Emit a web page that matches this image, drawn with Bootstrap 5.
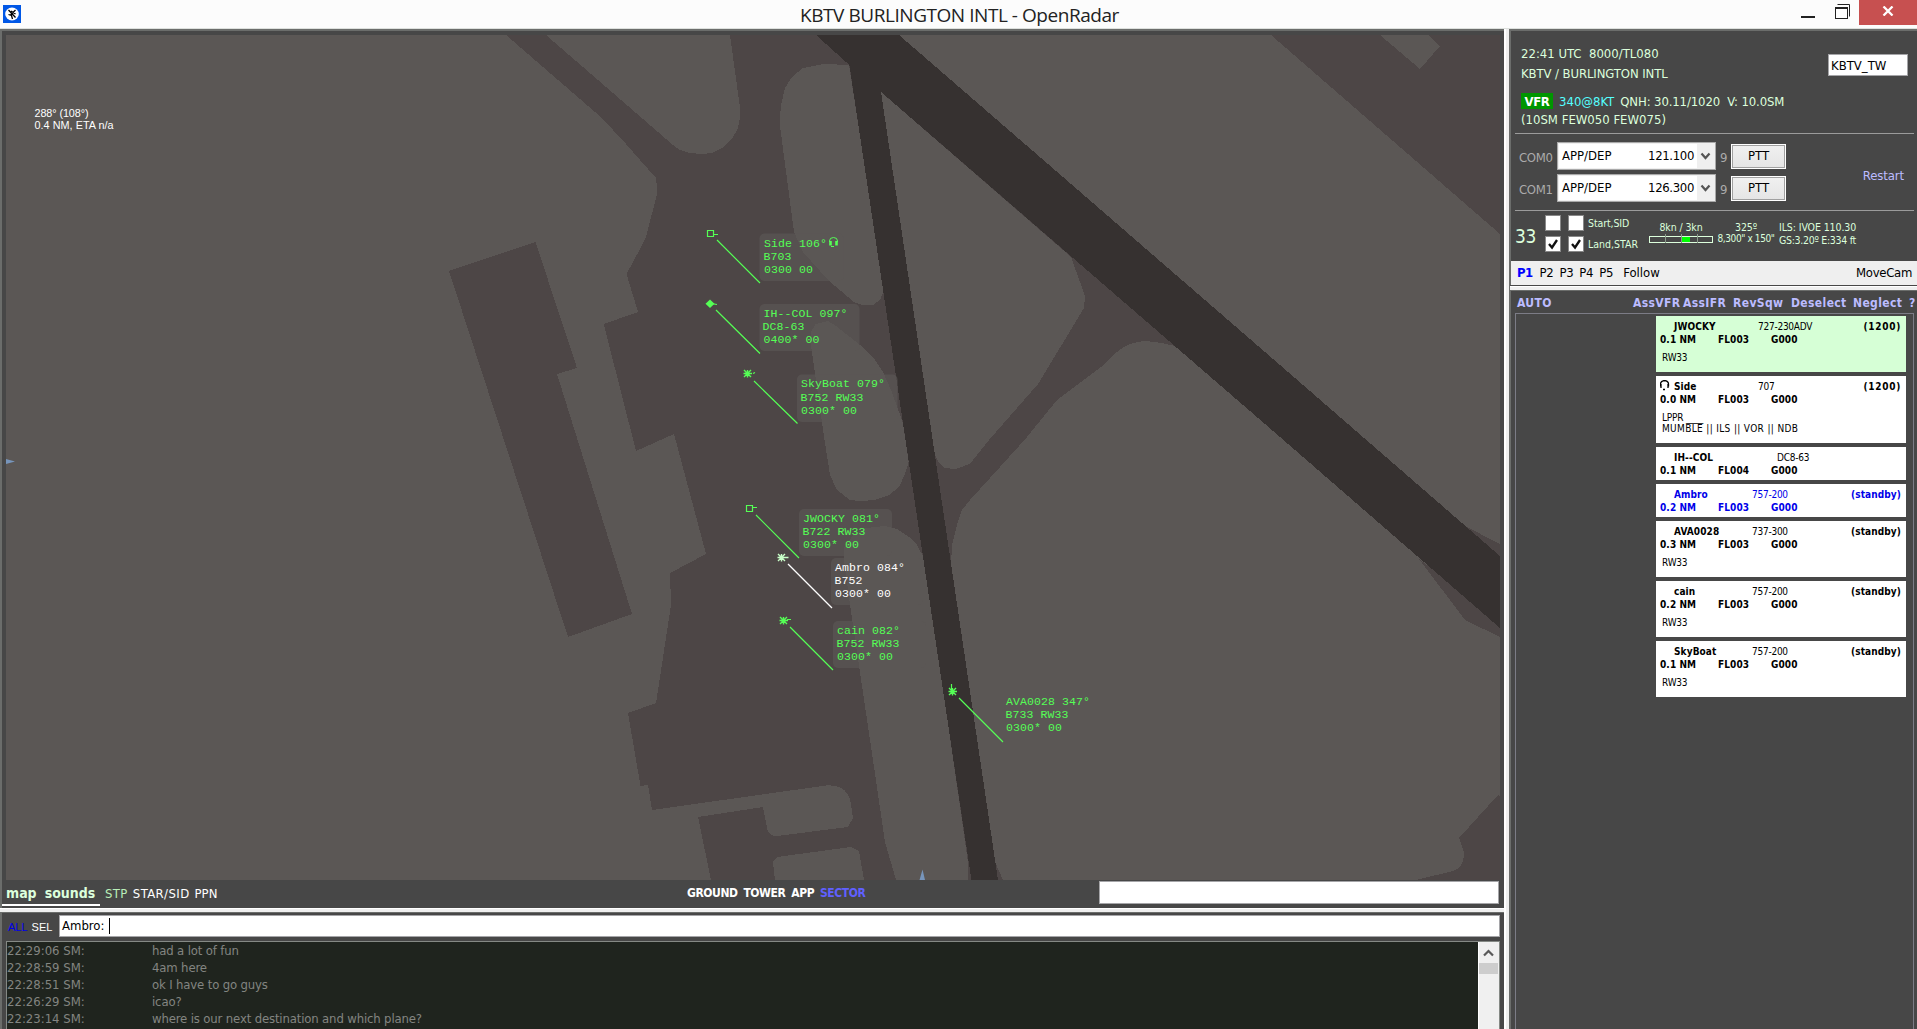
<!DOCTYPE html>
<html lang="en">
<head>
<meta charset="utf-8">
<title>KBTV BURLINGTON INTL - OpenRadar</title>
<link rel="stylesheet" href="https://cdn.jsdelivr.net/npm/bootstrap@5.3.0/dist/css/bootstrap.min.css">
<style>
:root{--panel:#474747;--edge:#6b6d6b;--mint:#dcffdc;--lav:#bcbcff}
html,body{height:100%}
body{font-family:"DejaVu Sans Condensed","DejaVu Sans",sans-serif;font-size:13px;line-height:18px;color:#000;background:var(--panel);width:1917px;height:1029px;white-space:pre}
svg{display:block}
.titlebar{height:29px;background:#fcfcfc;border-bottom:1px solid #dde0dd}
.wtitle{font:19px/25px "Open Sans",sans-serif;letter-spacing:-.45px;color:#222;padding:3px 0 0 2px}
.closebox{width:58px;height:25px;background:#c75050}
.main{height:1000px}
.leftcol{width:1504px}
.vsplit{width:5px;background:linear-gradient(90deg,#fff 2px,#efefef 2px)}
.mappane{height:879px;border-top:2px solid var(--edge);border-left:2px solid var(--edge);padding:4px 0 0 4px}
.mapbar{height:28px;padding-right:5px}
.tabs{width:98px;height:26px;margin-left:-4px;padding:4px 0 0 4px;border-bottom:2px solid #fff;font-weight:700;font-size:14px;line-height:18px;color:var(--mint)}
.tabs span+span{margin-left:8px}
.ranges{font-weight:700;font-size:12px;letter-spacing:-.42px;color:#fff;gap:5.8px;margin-left:236px;padding-top:4px}
.field{background:#fff;border:1px solid #a5a5a8}
.hsplit{height:5px;background:linear-gradient(#fff 1px,#efefef 1px 4px,var(--edge) 4px)}
.chatpane{border-left:2px solid var(--edge);padding:2px 4px 0 4px;min-height:0;overflow:hidden}
.whom{font:11px/18px "Liberation Sans",sans-serif;width:53px;color:#fff}
.caret{width:1px;height:16px;background:#000;margin-left:1px}
.log{margin-top:4px;height:90px;border:1px solid #858985;background:#1f241e;color:#838581;line-height:17px}
.log .who{width:145px}
.log .said{letter-spacing:-.15px}
.sbar{width:21px;background:#f0f0f0;border-left:1px solid #fff}
.thumb{width:19px;height:11px;background:#cdcdcd}
.side{width:408px;border-left:2px solid var(--edge);border-top:2px solid var(--edge)}
.info{height:103px;margin:0 3px 0 4px;padding:13px 6px 0 6px;border-bottom:1px solid #9b9b9b;color:var(--mint);line-height:20px}
.info .wx{line-height:18px}
.vfr{background:#009600;color:#fff;font-weight:700;width:32px;height:16px;line-height:17px;letter-spacing:-.4px}
.callbox{width:80px;height:22px;line-height:21px;margin-top:10px;padding-left:2px;color:#000}
.coms{height:77px;margin:0 3px 0 4px;border-bottom:1px solid #9b9b9b}
.comrow{height:28px}
.comlab{color:#ababab;padding-top:3px;letter-spacing:-.3px}
.combo{width:159px;height:28px;background:#efefef;border:1px solid #a9a9a9;padding:1px;line-height:24px}
.combo .val{background:#fff;padding:0 3px;width:138px}
.combo .val b{font-weight:400;letter-spacing:-.35px}
.ptt{width:55px;height:25px;border:1px solid #fff;outline:1px solid #a0a0a0;outline-offset:-2px;background:linear-gradient(#f0f0f0,#e5e5e5);line-height:22px}
.rwy{height:50px;margin-left:4px;color:var(--mint);font-size:10.5px;line-height:13px;letter-spacing:-.1px}
.rwno{font-size:19px;line-height:24px;letter-spacing:-.4px;width:30px}
.ck{width:16px;height:16px;background:#fff;border:1px solid #888}
.prefs{height:24px;background:#efefef;line-height:24px;padding:0 5px 0 6px;letter-spacing:-.3px}
.psplit{height:6px;margin-left:-1px;border-top:1px solid #474747;background:linear-gradient(#fff 1px,#efefef 1px 4px,var(--edge) 4px)}
.acts{height:22px;font-size:12px;line-height:25px;font-weight:700;letter-spacing:.38px;color:var(--lav);padding-left:6px}
.strips{margin:0 3px 0 4px;height:716px;border:1px solid #7c7c86;border-bottom:0;padding:2px 7px 0 0;gap:4px}
.strip{width:250px;background:#fff;font-size:10px;line-height:13px;padding:4px 5px 0 4px}
.strip.owned{background:#d6ffd6}
.strip.chosen{color:#0000e8}
.strip b{letter-spacing:.1px}
.strip .call{padding-left:14px;width:var(--c)}
.strip .dist{width:58px}.strip .lvl{width:53px}
.strip .model{letter-spacing:-.25px}
.strip .note{margin-top:6px;padding-left:2px;line-height:11px;letter-spacing:-.2px}
.phones{left:4px;top:4px}
.mono{font-family:"Liberation Mono",monospace;font-size:11.5px;fill:#55ff55}
</style>
<script src="https://cdn.jsdelivr.net/npm/bootstrap@5.3.0/dist/js/bootstrap.bundle.min.js"></script>
</head>
<body class="overflow-hidden m-0"><header class="titlebar d-flex justify-content-center position-relative"><svg class="position-absolute start-0 top-0" width="24" height="28"><rect x="3" y="5" width="18" height="18" fill="#0057e6"/><ellipse cx="12" cy="14" rx="6.8" ry="6.500" fill="#fff"/><path d="M8.500 10l7 7.500M15.500 10l-5 5M8.500 14.500l3 1 1 3.500M11 11l4.500 3" stroke="#000" stroke-width="1.300" fill="none"/></svg><div class="wtitle">KBTV BURLINGTON INTL - OpenRadar</div><div class="position-absolute end-0 top-0 d-flex"><svg width="58" height="26"><path d="M0 17h14" stroke="#222" stroke-width="2"/><path d="M36.500 4.500h12v12" fill="none" stroke="#222"/><rect x="34.500" y="7.500" width="12" height="11" fill="#fff" stroke="#222"/><path d="M34 8h13" stroke="#222" stroke-width="2"/></svg><div class="closebox d-flex align-items-center justify-content-center"><svg width="12" height="10" class="mb-1"><path d="M1.500.5l9 9M10.500.5l-9 9" stroke="#fff" stroke-width="2.300"/></svg></div></div></header><main class="main d-flex"><section class="leftcol d-flex flex-column"><div class="mappane flex-shrink-0"><svg width="1494" height="845" viewBox="6 35 1494 845">
<rect x="6" y="35" width="1494" height="845" fill="#5b5755"/>
<g fill="#4d4646" shape-rendering="crispEdges">
<path d="M449 271L535.500 242 577 368 557 374 632 614 568 637Z"/>
<path d="M506 35L595 112 613 130 626 144 640 160 656 178 657.500 192 646 237 640 249 626.500 274 638 312 603.700 324 636 451 674 434 706 554 670 573 671 605 656 703 628 713 640.500 786 648 785 652 810 826 785.500Q848 784 851 804L853 818 848 827 777 836Q768 836 767 828L763 807 698 817 711 880H775L773 862 777 857 851 847 859 851 864 880H1003L999 870 951 565 952 545 957 525 962 510 970 500 1024.500 440 1057 400 1101 367 1115.500 353Q1130 341 1146 341L1162 343 1175 346 1020 180 899 35Z"/>
<path d="M1271 35H1500V234Z"/><path d="M1463 525L1500 544V560ZM1419 559L1465 620 1500 637V620Z"/>
<path d="M1498 795L1500 796V880H1416L1453 871Q1464 868 1464 852L1459 838Z"/>
</g>
<g fill="#5b5755" shape-rendering="crispEdges">
<path d="M546 35L673 145 680 150 690 153 702 154 712 153 722 148 732 139 738 128 740 118V108L730 35Z"/>
<path d="M849 65L824 64 803 68 792 77 785 88 781 105 779.600 123 794 232 803 252 828 280 854 302 862 305 873 305 880 300 884 290Z"/>
<path d="M811 345V332L815.500 324 828 321 836 326 860 345 873.500 358 883 372 891 390 903 423 908.600 462 905 474 899 487 889 495 875 500 860 501 850 500 837 490 830 475 824.500 440Z"/>
<path d="M896 880L885 842 873 760 850 605 844 560V548L854 534 866 528 885 526 897 529 909 537 917 545 924 558 968 862V880Z"/>
<path d="M881 92L1071 257 1085 296 1084 308 1038 384 989 440 970.600 463 966.500 465 956 469 944 468 938 461 933 450Z"/>
<path d="M1380 35L1420 69 1440 46 1428 35Z"/>
<path d="M1003 880L951 565 953 600 995 862Z"/>
</g>
<path d="M816 35H899L1280 365 1500 556V628L1280 437 881 92 998 880H971.400L849.400 65Z" fill="#363130" shape-rendering="crispEdges"/>
<path d="M922.500 869.500L925 880H919.500ZM6 459L15 461.500 6 464Z" fill="#7795bb"/>
<g fill="#5b5755" fill-opacity=".68">
<rect x="759.500" y="233.500" width="84" height="47.500" rx="5"/><rect x="759.500" y="304" width="100" height="47" rx="5"/><rect x="797" y="374.500" width="100.500" height="47.500" rx="5"/><rect x="799" y="509" width="93" height="47" rx="5"/><rect x="831" y="558" width="92" height="47" rx="5"/><rect x="833" y="621" width="93" height="47" rx="5"/>
</g>
<g stroke="#55ff55" fill="none" stroke-width="1.200">
<path d="M717 240L760 283M716 310L760 353.500M754 381L797.500 423.500M756 515L799 558M790 627L833 670M959 698L1003 742"/>
<path d="M707.500 230.500h6v6h-6zM714 234.500h4M746.500 505.500h6v6h-6zM753 507.500h4M711 303.500l6 1M753 373.500l2-1M787 619.500h4M951.500 690v-6"/>
<path d="M788 564L832 608" stroke="#fff"/>
</g>
<path d="M710 299.500l4.500 4.200-4.500 4.200-4.500-4.200z" fill="#55ff55"/>
<g fill="none" stroke-width="1.400"><g stroke="#55ff55"><path id="st" d="M744 370l7 7M751 370l-7 7M747.500 370v7.500M743.500 373.500h8.500"/><use href="#st" x="36" y="247"/><use href="#st" x="205" y="318"/></g><path d="M778 554l7 7M785 554l-7 7M781.500 554v7.500M777.500 557.500h11" stroke="#c8ffc8"/></g>
<g class="mono">
<text x="764" y="247" textLength="63" xml:space="preserve">Side 106°</text><text x="763.500" y="260" textLength="28">B703</text><text x="764" y="273" textLength="49">0300 00</text>
<text x="763.500" y="317" textLength="84">IH--COL 097°</text><text x="762.500" y="330" textLength="42">DC8-63</text><text x="763.500" y="343" textLength="56">0400* 00</text>
<text x="801" y="387" textLength="84">SkyBoat 079°</text><text x="800.500" y="401" textLength="63">B752 RW33</text><text x="801" y="414" textLength="56">0300* 00</text>
<text x="803" y="522" textLength="77">JWOCKY 081°</text><text x="802.500" y="535" textLength="63">B722 RW33</text><text x="803" y="548" textLength="56">0300* 00</text>
<g fill="#fff"><text x="835" y="571" textLength="70">Ambro 084°</text><text x="834.500" y="584" textLength="28">B752</text><text x="835" y="597" textLength="56">0300* 00</text></g>
<text x="837" y="634" textLength="63">cain 082°</text><text x="836.500" y="647" textLength="63">B752 RW33</text><text x="837" y="660" textLength="56">0300* 00</text>
<text x="1006" y="705" textLength="84">AVA0028 347°</text><text x="1005.500" y="718" textLength="63">B733 RW33</text><text x="1006" y="731" textLength="56">0300* 00</text>
</g>
<g fill="none" stroke="#55ff55"><path d="M829.500 242v-1q0-3.500 4-3.500t4 3.500v1M831 246.500h3"/><path d="M830.500 241v4.500M836.500 241v4.500" stroke-width="2.600"/></g>
<g fill="#fff" font-family="Liberation Sans, sans-serif" font-size="10.800"><text x="34.500" y="117" textLength="54">288° (108°)</text><text x="34.500" y="129" textLength="79">0.4 NM, ETA n/a</text></g>
</svg><div class="mapbar d-flex justify-content-between"><div class="d-flex"><div class="tabs"><span>map</span><span>sounds</span></div><div class="d-flex text-white" style="padding:5px 0 0 5px;gap:5px"><span style="color:#b9efb9;letter-spacing:.4px">STP</span><span style="letter-spacing:.4px">STAR/SID</span><span>PPN</span></div></div><div class="ranges d-flex"><span>GROUND</span><span>TOWER</span><span>APP</span><span style="color:#6060ff">SECTOR</span></div><div class="field" style="width:400px;height:23px;margin-top:1px"></div></div></div><div class="hsplit flex-shrink-0"></div><div class="chatpane flex-grow-1"><div class="d-flex" style="height:22px"><div class="whom d-flex gap-1" style="padding:3px 0 0 2px"><span style="color:#0000e8">ALL</span><span>SEL</span></div><div class="field d-flex align-items-center flex-grow-1" style="padding-left:2px"><span>Ambro: </span><span class="caret"></span></div></div><div class="log d-flex justify-content-between"><div><div class="d-flex"><span class="who">22:29:06 SM:</span><span class="said">had a lot of fun</span></div><div class="d-flex"><span class="who">22:28:59 SM:</span><span class="said">4am here</span></div><div class="d-flex"><span class="who">22:28:51 SM:</span><span class="said">ok I have to go guys</span></div><div class="d-flex"><span class="who">22:26:29 SM:</span><span class="said">icao?</span></div><div class="d-flex"><span class="who">22:23:14 SM:</span><span class="said">where is our next destination and which plane?</span></div></div><div class="sbar"><svg width="19" height="21"><path d="M5 13.500l4.500-4.500 4.500 4.500" fill="none" stroke="#5a5a5a" stroke-width="2.200"/></svg><div class="thumb"></div></div></div></div></section><div class="vsplit"></div><aside class="side"><div class="info d-flex justify-content-between"><div><div>22:41 UTC  8000/TL080</div><div style="letter-spacing:-.1px">KBTV / BURLINGTON INTL</div><div class="wx d-flex" style="margin-top:9px"><span class="vfr text-center" style="margin:0 6px 0 0">VFR</span><span style="color:#5ff">340@8KT</span><span style="margin-left:6px;letter-spacing:-.12px">QNH: 30.11/1020  V: 10.0SM</span></div><div class="wx">(10SM FEW050 FEW075)</div></div><div class="field callbox">KBTV_TW</div></div><div class="coms d-flex align-items-center justify-content-between"><div class="d-flex flex-column gap-1"><div class="comrow d-flex align-items-center"><span class="comlab" style="width:38px;padding-left:4px">COM0</span><div class="combo d-flex ms-1"><div class="val d-flex justify-content-between"><span>APP/DEP</span><b>121.100</b></div><svg width="17" height="24"><path d="M4.500 9.500l4 4.500 4-4.500" fill="none" stroke="#555" stroke-width="2.200"/></svg></div><span class="comlab" style="width:15px;padding-left:4px">9</span><div class="ptt text-center">PTT</div></div><div class="comrow d-flex align-items-center"><span class="comlab" style="width:38px;padding-left:4px">COM1</span><div class="combo d-flex ms-1"><div class="val d-flex justify-content-between"><span>APP/DEP</span><b>126.300</b></div><svg width="17" height="24"><path d="M4.500 9.500l4 4.500 4-4.500" fill="none" stroke="#555" stroke-width="2.200"/></svg></div><span class="comlab" style="width:15px;padding-left:4px">9</span><div class="ptt text-center">PTT</div></div></div><span style="color:var(--lav);padding:7px 10px 0 0;letter-spacing:-.1px">Restart</span></div><div class="rwy d-flex"><span class="rwno" style="padding-top:13px">33</span><div class="d-flex flex-column" style="padding-top:4px;gap:5px"><div class="d-flex"><div class="ck"></div><div class="ck" style="margin:0 4px 0 7px"></div><span style="padding-top:2px">Start,SID</span></div><div class="d-flex"><div class="ck"><svg width="14" height="14"><path d="M3 7l3 3.500L11 3" fill="none" stroke="#111" stroke-width="2.300"/></svg></div><div class="ck" style="margin:0 4px 0 7px"><svg width="14" height="14"><path d="M3 7l3 3.500L11 3" fill="none" stroke="#111" stroke-width="2.300"/></svg></div><span style="padding-top:2px;letter-spacing:0">Land,STAR</span></div></div><div style="width:64px;padding-top:10px;margin-left:11px" class="text-center"><div>8kn / 3kn</div><svg width="64" height="9"><rect x=".5" y="2.500" width="63" height="6" fill="none" stroke="#dcffdc"/><path d="M16.500 0v9M32.500 0v9M48.500 0v9" stroke="#8a9a8a"/><rect x="33" y="3" width="8" height="5" fill="#0f0"/></svg></div><div class="text-center" style="width:58px;padding-top:10px;margin-left:4px;line-height:12px"><div>325º</div><div style="font-size:10px;letter-spacing:-.4px">8,300" x 150"</div></div><div style="padding-top:10px;margin-left:4px"><div>ILS: IVOE 110.30</div><div style="letter-spacing:-.3px">GS:3.20º E:334 ft</div></div></div><div class="prefs d-flex justify-content-between"><div class="d-flex" style="gap:6px"><b style="color:#0000ff;letter-spacing:-.6px;margin-right:1px">P1</b><span>P2</span><span>P3</span><span>P4</span><span>P5</span><span style="margin-left:4px;letter-spacing:0">Follow</span></div><span>MoveCam</span></div><div class="psplit"></div><div class="acts d-flex"><span style="width:116px">AUTO</span><span style="width:50px">AssVFR</span><span style="width:50px">AssIFR</span><span style="width:58px">RevSqw</span><span style="width:62px">Deselect</span><span style="width:56px">Neglect</span><span>?</span></div><div class="strips d-flex flex-column align-items-end"><div class="strip owned" style="height:56px"><div class="d-flex"><b class="call" style="--c:98px">JWOCKY</b><span class="model">727-230ADV</span><b class="ms-auto" style="letter-spacing:.7px">(1200)</b></div><div class="d-flex"><b class="dist">0.1 NM</b><b class="lvl">FL003</b><b>G000</b></div><div class="note">RW33</div></div><div class="strip position-relative" style="height:67px"><svg class="phones position-absolute" width="10" height="11"><path d="M.5 6.500V4q0-3 4-3.500 4 .5 4 3.500v2.500M1 4v4M8 4v4M3 9.500h2" fill="none" stroke="#000" stroke-width="1.300"/></svg><div class="d-flex"><b class="call" style="--c:98px">Side</b><span class="model">707</span><b class="ms-auto" style="letter-spacing:.7px">(1200)</b></div><div class="d-flex"><b class="dist">0.0 NM</b><b class="lvl">FL003</b><b>G000</b></div><div class="note">LPPR ____
<span style="letter-spacing:.35px">MUMBLE || ILS || VOR || NDB</span></div></div><div class="strip" style="height:33px"><div class="d-flex"><b class="call" style="--c:117px">IH--COL</b><span class="model">DC8-63</span></div><div class="d-flex"><b class="dist">0.1 NM</b><b class="lvl">FL004</b><b>G000</b></div></div><div class="strip chosen" style="height:33px"><div class="d-flex"><b class="call" style="--c:92px">Ambro</b><span class="model">757-200</span><b class="ms-auto">(standby)</b></div><div class="d-flex"><b class="dist">0.2 NM</b><b class="lvl">FL003</b><b>G000</b></div></div><div class="strip" style="height:56px"><div class="d-flex"><b class="call" style="--c:92px">AVA0028</b><span class="model">737-300</span><b class="ms-auto">(standby)</b></div><div class="d-flex"><b class="dist">0.3 NM</b><b class="lvl">FL003</b><b>G000</b></div><div class="note">RW33</div></div><div class="strip" style="height:56px"><div class="d-flex"><b class="call" style="--c:92px">cain</b><span class="model">757-200</span><b class="ms-auto">(standby)</b></div><div class="d-flex"><b class="dist">0.2 NM</b><b class="lvl">FL003</b><b>G000</b></div><div class="note">RW33</div></div><div class="strip" style="height:56px"><div class="d-flex"><b class="call" style="--c:92px">SkyBoat</b><span class="model">757-200</span><b class="ms-auto">(standby)</b></div><div class="d-flex"><b class="dist">0.1 NM</b><b class="lvl">FL003</b><b>G000</b></div><div class="note">RW33</div></div></div></aside></main></body>
</html>
